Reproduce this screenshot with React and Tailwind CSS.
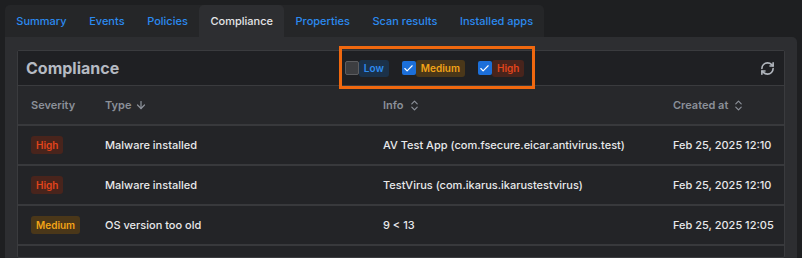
import React from 'react';
import { ArrowDown, ChevronsUpDown, RefreshCw, Check } from 'lucide-react';

const tabs = ['Summary', 'Events', 'Policies', 'Compliance', 'Properties', 'Scan results', 'Installed apps'];

const rows = [
  { severity: 'High', type: 'Malware installed', info: 'AV Test App (com.fsecure.eicar.antivirus.test)', created: 'Feb 25, 2025 12:10' },
  { severity: 'High', type: 'Malware installed', info: 'TestVirus (com.ikarus.ikarustestvirus)', created: 'Feb 25, 2025 12:10' },
  { severity: 'Medium', type: 'OS version too old', info: '9 < 13', created: 'Feb 25, 2025 12:05' },
];

const badgeStyles = {
  Low: 'bg-[#1b3149] text-[#2f8cf0]',
  Medium: 'bg-[#4a3719] text-[#f3a417]',
  High: 'bg-[#48241c] text-[#e2441b]',
};

function SeverityBadge({ level }) {
  return (
    <span className={`inline-flex items-center h-[18px] px-[5px] rounded-[3px] text-[10px] font-semibold ${badgeStyles[level]}`}>
      {level}
    </span>
  );
}

function FilterCheck({ level, checked }) {
  return (
    <label className="flex items-center">
      <span
        className={`w-[14px] h-[14px] rounded-[2px] flex items-center justify-center ${
          checked ? 'bg-[#1c6fd9]' : 'bg-[#3d3e41] border border-[#5c5d60]'
        }`}
      >
        {checked && <Check size={11} strokeWidth={2.5} className="text-white" />}
      </span>
      <span className={`inline-flex items-center h-[17px] px-[5px] rounded-[3px] text-[10px] font-semibold ${badgeStyles[level]}`}>
        {level}
      </span>
    </label>
  );
}

export default function App() {
  return (
    <div className="w-[802px] h-[258px] overflow-hidden bg-[#1e1f21] pt-[5px] px-[5px] font-['Inter',sans-serif]">
      <div className="flex w-fit h-[32px] bg-[#252628] rounded-t-[5px]">
        {tabs.map((t) => (
          <div
            key={t}
            className={`px-[11.3px] flex items-center text-[11px] font-medium whitespace-nowrap rounded-t-[5px] ${
              t === 'Compliance' ? 'bg-[#2d2e31] text-[#e4e5e7]' : 'text-[#2b8af0]'
            }`}
          >
            {t}
          </div>
        ))}
      </div>
      <div className="bg-[#2d2e31] rounded-tr-[5px] h-[221px] px-[12px] pt-[13px]">
        <div className="border border-[#3a3b3e] rounded-[2px] bg-[#232427] h-full">
          <div className="flex items-center justify-between h-[35px] bg-[#1f2023] pl-[8px] pr-[9px] border-b border-[#3a3b3e]">
            <h2 className="text-[16px] font-bold text-[#b5bac2]">Compliance</h2>
            <div className="relative flex items-center gap-[13px] mr-[10px]">
              <FilterCheck level="Low" checked={false} />
              <FilterCheck level="Medium" checked />
              <FilterCheck level="High" checked />
              <div className="absolute -left-[6px] -right-[11px] -top-[14px] -bottom-[12px] border-[3px] border-[#f0680f] pointer-events-none" />
            </div>
            <RefreshCw size={15} strokeWidth={2.6} className="text-[#b1b6bd]" />
          </div>
          <div className="grid grid-cols-[87px_278px_290px_1fr] h-[40px] items-center bg-[#27282b] border-b-2 border-[#38393c] text-[11px] font-semibold text-[#8b9099]">
            <div className="pl-[13px]">Severity</div>
            <div className="flex items-center gap-[4px]">
              Type <ArrowDown size={12} strokeWidth={2.5} />
            </div>
            <div className="flex items-center gap-[4px]">
              Info <ChevronsUpDown size={13} strokeWidth={2.2} />
            </div>
            <div className="flex items-center gap-[4px]">
              Created at <ChevronsUpDown size={13} strokeWidth={2.2} />
            </div>
          </div>
          {rows.map((r, i) => (
            <div
              key={i}
              className="grid grid-cols-[87px_278px_290px_1fr] h-[40px] items-center border-b-2 border-[#38393c] text-[11px] font-medium text-[#e8e9eb]"
            >
              <div className="pl-[13px]">
                <SeverityBadge level={r.severity} />
              </div>
              <div>{r.type}</div>
              <div>{r.info}</div>
              <div>{r.created}</div>
            </div>
          ))}
        </div>
      </div>
    </div>
  );
}
